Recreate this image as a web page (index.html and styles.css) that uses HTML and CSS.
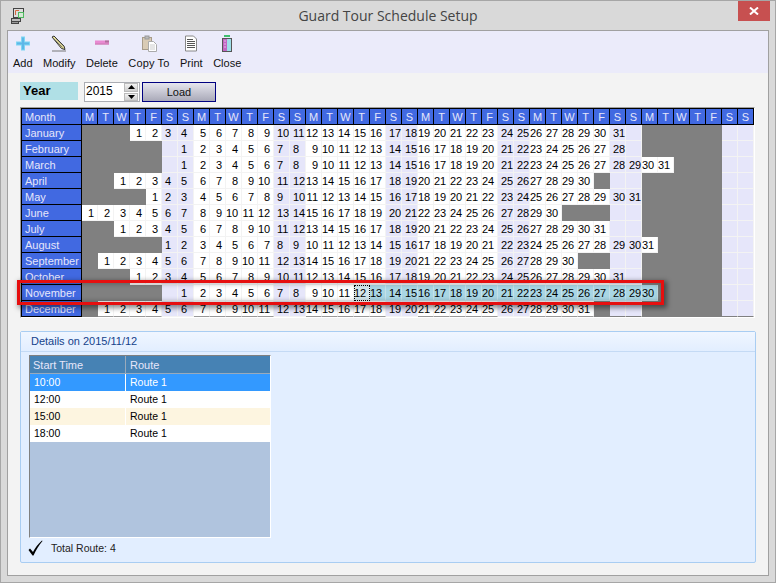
FILE: index.html
```html
<!DOCTYPE html>
<html lang="en">
<head>
<meta charset="utf-8">
<title>Guard Tour Schedule Setup</title>
<link rel="stylesheet" href="styles.css">
</head>
<body>
<div class="window">
  <header class="titlebar">
    <svg class="appicon" width="15" height="16" viewBox="0 0 15 16"><rect x="2.500" y="0.500" width="10" height="9" fill="#ddd" stroke="#444"/><path d="M4.500 7V2.500H8" fill="none" stroke="#d8683f"/><rect x="7.500" y="4.500" width="5" height="5" fill="#d5e8d5" stroke="#4db85e"/><rect x="0.500" y="10.500" width="9" height="3" fill="#bbb" stroke="#444"/><rect x="0.500" y="13.500" width="7" height="2" fill="#999" stroke="#444"/></svg>
    <div class="title">Guard Tour Schedule Setup</div>
    <div class="closebtn"><svg width="10" height="8" viewBox="0 0 10 8"><path d="M1 0.500 L9 7.500 M9 0.500 L1 7.500" stroke="#fff" stroke-width="2"/></svg></div>
  </header>
  <main class="client">
    <nav class="toolbar">
      <div class="tool">
        <svg width="16" height="16" viewBox="0 0 16 16"><path d="M6 1h4v5h5v4h-5v5H6v-5H1V6h5z" fill="#7fd6f2"/><path d="M7 2h2v5h5v2H9v5H7V9H2V7h5z" fill="#5db7e8"/></svg>
        <span>Add</span>
      </div>
      <div class="tool">
        <svg width="16" height="16" viewBox="0 0 16 16"><path d="M1 1.500 L3 0.500 L13 10.500 L14 14 L10.500 13 Z" fill="#e6df9a" stroke="#333" stroke-width="1"/><path d="M3 3.500 L11.500 12 M5 3 L12.500 10.500" stroke="#555" stroke-width=".7"/><path d="M1 15.500H15" stroke="#777"/></svg>
        <span>Modify</span>
      </div>
      <div class="tool">
        <svg width="16" height="16" viewBox="0 0 16 16"><rect x="1" y="5" width="14" height="4" fill="#e98ad2"/><rect x="1" y="8" width="14" height="1" fill="#c77db0"/><rect x="11" y="5" width="4" height="2" fill="#b0709c"/></svg>
        <span>Delete</span>
      </div>
      <div class="tool copy">
        <svg width="16" height="17" viewBox="0 0 16 17"><rect x="1.500" y="2.500" width="9" height="12" fill="#d9cbb5" stroke="#a89c8a"/><rect x="4" y="1" width="4" height="3" fill="#bbb" stroke="#999"/><path d="M7.500 6.500h5l3 3v7h-8z" fill="#fff" stroke="#aaa"/><path d="M9 10h5M9 12h5M9 14h5" stroke="#ccc"/></svg>
        <span>Copy To</span>
      </div>
      <div class="tool">
        <svg width="14" height="16" viewBox="0 0 14 16"><path d="M1.500 .5h8l3 3v12h-11z" fill="#fff" stroke="#888"/><path d="M3 4h6M3 6h8M3 8h8M3 10h8M3 12h8" stroke="#555"/></svg>
        <span>Print</span>
      </div>
      <div class="tool">
        <svg width="12" height="17" viewBox="0 0 12 17"><rect x="3" y="0" width="6" height="2" fill="#3fbf6f"/><rect x="1.500" y="3.500" width="9" height="13" fill="#c266c2" stroke="#555"/><rect x="6" y="4" width="4" height="12" fill="#9fdfe8"/><path d="M3 6h2M3 9h2M3 12h2" stroke="#e8b8e8"/></svg>
        <span>Close</span>
      </div>
    </nav>
    <section class="yearbar">
      <div class="yearlabel">Year</div>
      <div class="spin">
        <span class="spinval">2015</span>
        <div class="spinbtns">
          <div class="spinbtn"><svg width="7" height="4" viewBox="0 0 7 4"><path d="M3.500 0L7 4H0z"/></svg></div>
          <div class="spinbtn"><svg width="7" height="4" viewBox="0 0 7 4"><path d="M0 0H7L3.500 4z"/></svg></div>
        </div>
      </div>
      <button class="load" type="button">Load</button>
    </section>
    <section class="calendar">
      <div class="row head"><div class="m">Month</div><div class="h">M</div><div class="h">T</div><div class="h">W</div><div class="h">T</div><div class="h">F</div><div class="h">S</div><div class="h">S</div><div class="h">M</div><div class="h">T</div><div class="h">W</div><div class="h">T</div><div class="h">F</div><div class="h">S</div><div class="h">S</div><div class="h">M</div><div class="h">T</div><div class="h">W</div><div class="h">T</div><div class="h">F</div><div class="h">S</div><div class="h">S</div><div class="h">M</div><div class="h">T</div><div class="h">W</div><div class="h">T</div><div class="h">F</div><div class="h">S</div><div class="h">S</div><div class="h">M</div><div class="h">T</div><div class="h">W</div><div class="h">T</div><div class="h">F</div><div class="h">S</div><div class="h">S</div><div class="h">M</div><div class="h">T</div><div class="h">W</div><div class="h">T</div><div class="h">F</div><div class="h">S</div><div class="h">S</div></div>
      <div class="row"><div class="m">January</div><span></span><span></span><span></span><span>1</span><span>2</span><span>3</span><span>4</span><span>5</span><span>6</span><span>7</span><span>8</span><span>9</span><span>10</span><span>11</span><span>12</span><span>13</span><span>14</span><span>15</span><span>16</span><span>17</span><span>18</span><span>19</span><span>20</span><span>21</span><span>22</span><span>23</span><span>24</span><span>25</span><span>26</span><span>27</span><span>28</span><span>29</span><span>30</span><span>31</span><span></span><span></span><span></span><span></span><span></span><span></span><span></span><span></span></div>
      <div class="row"><div class="m">February</div><span></span><span></span><span></span><span></span><span></span><span></span><span>1</span><span>2</span><span>3</span><span>4</span><span>5</span><span>6</span><span>7</span><span>8</span><span>9</span><span>10</span><span>11</span><span>12</span><span>13</span><span>14</span><span>15</span><span>16</span><span>17</span><span>18</span><span>19</span><span>20</span><span>21</span><span>22</span><span>23</span><span>24</span><span>25</span><span>26</span><span>27</span><span>28</span><span></span><span></span><span></span><span></span><span></span><span></span><span></span><span></span></div>
      <div class="row"><div class="m">March</div><span></span><span></span><span></span><span></span><span></span><span></span><span>1</span><span>2</span><span>3</span><span>4</span><span>5</span><span>6</span><span>7</span><span>8</span><span>9</span><span>10</span><span>11</span><span>12</span><span>13</span><span>14</span><span>15</span><span>16</span><span>17</span><span>18</span><span>19</span><span>20</span><span>21</span><span>22</span><span>23</span><span>24</span><span>25</span><span>26</span><span>27</span><span>28</span><span>29</span><span>30</span><span>31</span><span></span><span></span><span></span><span></span><span></span></div>
      <div class="row"><div class="m">April</div><span></span><span></span><span>1</span><span>2</span><span>3</span><span>4</span><span>5</span><span>6</span><span>7</span><span>8</span><span>9</span><span>10</span><span>11</span><span>12</span><span>13</span><span>14</span><span>15</span><span>16</span><span>17</span><span>18</span><span>19</span><span>20</span><span>21</span><span>22</span><span>23</span><span>24</span><span>25</span><span>26</span><span>27</span><span>28</span><span>29</span><span>30</span><span></span><span></span><span></span><span></span><span></span><span></span><span></span><span></span><span></span><span></span></div>
      <div class="row"><div class="m">May</div><span></span><span></span><span></span><span></span><span>1</span><span>2</span><span>3</span><span>4</span><span>5</span><span>6</span><span>7</span><span>8</span><span>9</span><span>10</span><span>11</span><span>12</span><span>13</span><span>14</span><span>15</span><span>16</span><span>17</span><span>18</span><span>19</span><span>20</span><span>21</span><span>22</span><span>23</span><span>24</span><span>25</span><span>26</span><span>27</span><span>28</span><span>29</span><span>30</span><span>31</span><span></span><span></span><span></span><span></span><span></span><span></span><span></span></div>
      <div class="row"><div class="m">June</div><span>1</span><span>2</span><span>3</span><span>4</span><span>5</span><span>6</span><span>7</span><span>8</span><span>9</span><span>10</span><span>11</span><span>12</span><span>13</span><span>14</span><span>15</span><span>16</span><span>17</span><span>18</span><span>19</span><span>20</span><span>21</span><span>22</span><span>23</span><span>24</span><span>25</span><span>26</span><span>27</span><span>28</span><span>29</span><span>30</span><span></span><span></span><span></span><span></span><span></span><span></span><span></span><span></span><span></span><span></span><span></span><span></span></div>
      <div class="row"><div class="m">July</div><span></span><span></span><span>1</span><span>2</span><span>3</span><span>4</span><span>5</span><span>6</span><span>7</span><span>8</span><span>9</span><span>10</span><span>11</span><span>12</span><span>13</span><span>14</span><span>15</span><span>16</span><span>17</span><span>18</span><span>19</span><span>20</span><span>21</span><span>22</span><span>23</span><span>24</span><span>25</span><span>26</span><span>27</span><span>28</span><span>29</span><span>30</span><span>31</span><span></span><span></span><span></span><span></span><span></span><span></span><span></span><span></span><span></span></div>
      <div class="row"><div class="m">August</div><span></span><span></span><span></span><span></span><span></span><span>1</span><span>2</span><span>3</span><span>4</span><span>5</span><span>6</span><span>7</span><span>8</span><span>9</span><span>10</span><span>11</span><span>12</span><span>13</span><span>14</span><span>15</span><span>16</span><span>17</span><span>18</span><span>19</span><span>20</span><span>21</span><span>22</span><span>23</span><span>24</span><span>25</span><span>26</span><span>27</span><span>28</span><span>29</span><span>30</span><span>31</span><span></span><span></span><span></span><span></span><span></span><span></span></div>
      <div class="row"><div class="m">September</div><span></span><span>1</span><span>2</span><span>3</span><span>4</span><span>5</span><span>6</span><span>7</span><span>8</span><span>9</span><span>10</span><span>11</span><span>12</span><span>13</span><span>14</span><span>15</span><span>16</span><span>17</span><span>18</span><span>19</span><span>20</span><span>21</span><span>22</span><span>23</span><span>24</span><span>25</span><span>26</span><span>27</span><span>28</span><span>29</span><span>30</span><span></span><span></span><span></span><span></span><span></span><span></span><span></span><span></span><span></span><span></span><span></span></div>
      <div class="row"><div class="m">October</div><span></span><span></span><span></span><span>1</span><span>2</span><span>3</span><span>4</span><span>5</span><span>6</span><span>7</span><span>8</span><span>9</span><span>10</span><span>11</span><span>12</span><span>13</span><span>14</span><span>15</span><span>16</span><span>17</span><span>18</span><span>19</span><span>20</span><span>21</span><span>22</span><span>23</span><span>24</span><span>25</span><span>26</span><span>27</span><span>28</span><span>29</span><span>30</span><span>31</span><span></span><span></span><span></span><span></span><span></span><span></span><span></span><span></span></div>
      <div class="row"><div class="m">November</div><span></span><span></span><span></span><span></span><span></span><span></span><span>1</span><span>2</span><span>3</span><span>4</span><span>5</span><span>6</span><span>7</span><span>8</span><span>9</span><span>10</span><span>11</span><span class="f">12</span><span class="s">13</span><span class="s">14</span><span class="s">15</span><span class="s">16</span><span class="s">17</span><span class="s">18</span><span class="s">19</span><span class="s">20</span><span class="s">21</span><span class="s">22</span><span class="s">23</span><span class="s">24</span><span class="s">25</span><span class="s">26</span><span class="s">27</span><span class="s">28</span><span class="s">29</span><span class="s">30</span><span></span><span></span><span></span><span></span><span></span><span></span></div>
      <div class="row last"><div class="m">December</div><span></span><span>1</span><span>2</span><span>3</span><span>4</span><span>5</span><span>6</span><span>7</span><span>8</span><span>9</span><span>10</span><span>11</span><span>12</span><span>13</span><span>14</span><span>15</span><span>16</span><span>17</span><span>18</span><span>19</span><span>20</span><span>21</span><span>22</span><span>23</span><span>24</span><span>25</span><span>26</span><span>27</span><span>28</span><span>29</span><span>30</span><span>31</span><span></span><span></span><span></span><span></span><span></span><span></span><span></span><span></span><span></span><span></span></div>
      <div class="callout"></div>
    </section>
    <section class="details">
      <div class="detailshead">Details on 2015/11/12</div>
      <div class="detailsbody">
        <div class="routes">
          <div class="rrow rhead"><div class="c1">Start Time</div><div class="c2">Route</div></div>
          <div class="rrow rsel"><div class="c1">10:00</div><div class="c2">Route 1</div></div>
          <div class="rrow"><div class="c1">12:00</div><div class="c2">Route 1</div></div>
          <div class="rrow ralt"><div class="c1">15:00</div><div class="c2">Route 1</div></div>
          <div class="rrow"><div class="c1">18:00</div><div class="c2">Route 1</div></div>
        </div>
        <div class="total">
          <svg width="15" height="16" viewBox="0 0 15 16"><path d="M0.500 10 L2 8.500 L5 12 C7 8 10 4 14 0.500 L14.500 1 C11 5 8 10 5.500 15.500 L4.500 15.500 Z" fill="#000"/></svg>
          <span>Total Route: 4</span>
        </div>
      </div>
    </section>
  </main>
</div>
</body>
</html>
```
FILE: styles.css
```css
* { box-sizing: border-box; }
html, body { margin: 0; padding: 0; }
body { font-family: "Liberation Sans", Arial, sans-serif; font-size: 11px; color: #000; background: #d9d9d9; }
.window { width: 776px; height: 583px; border: 1px solid #a6a6a6; background: #d9d9d9; display: flex; flex-direction: column; overflow: hidden; }
.titlebar { height: 29px; flex: none; display: flex; align-items: flex-start; position: relative; }
.appicon { margin: 7px 0 0 10px; flex: none; }
.title { position: absolute; left: 0; right: 0; top: 5px; text-align: center; font-family: "Open Sans", sans-serif; font-size: 14px; line-height: 20px; color: #444; }
.closebtn { position: absolute; right: 5px; top: 0; width: 32px; height: 20px; background: #c75050; display: flex; align-items: center; justify-content: center; }
.client { flex: 1; margin: 0 6px 6px; border: 1px solid #a0a0a0; background: #f3f3f3; display: flex; flex-direction: column; }
.toolbar { height: 42px; flex: none; background: #ebebfa; display: flex; padding: 0 0 0 5px; gap: 10.500px; }
.tool { display: flex; flex-direction: column; align-items: center; color: #111; }
.tool svg { height: 17px; margin-top: 4px; flex: none; }
.tool span { margin-top: 4px; line-height: 14px; white-space: nowrap; }
.copy span { letter-spacing: .15px; }
.yearbar { display: flex; margin: 9px 0 0 12px; height: 20px; flex: none; }
.yearlabel { width: 58px; height: 18px; background: #b0e0e6; font-weight: bold; font-size: 13px; line-height: 18px; padding-left: 3px; }
.spin { width: 56px; height: 20px; margin-left: 6px; background: #fff; border: 1px solid #abadb3; display: flex; justify-content: space-between; font-size: 12px; }
.spinval { line-height: 17px; padding-left: 1px; }
.spinbtns { width: 15px; display: flex; flex-direction: column; gap: 1px; padding: 0 1px 0 0; }
.spinbtn { flex: 1; background: linear-gradient(#f2f2f2, #cfcfcf); border: 1px solid #bbb; display: flex; align-items: center; justify-content: center; }
.load { width: 74px; height: 20px; margin-left: 2px; border: 1px solid #000080; background: linear-gradient(#e6e6ee, #a9a9b8); font: inherit; padding: 0; color: #111; }
.calendar { position: relative; margin: 5px 0 0 12px; width: 735px; flex: none; border: 1px solid; border-color: #a0a0a0 #fff #fff #a0a0a0; }
.row { display: flex; height: 16px; }
.row .m { width: 61px; flex: none; background: #4169e1; color: #e6e6fa; border: 1px solid #000; border-width: 0 1px 1px 1px; padding-left: 3px; line-height: 17px; }
.row span { width: 16px; flex: none; background: #fff; border: 1px solid #f3f3f3; border-width: 0 1px 1px 0; text-align: right; padding-right: 3px; line-height: 17px; white-space: nowrap; }
.row span:empty { background: #808080; border-color: #808080; }
.row span:nth-child(7n), .row span:nth-child(7n+1) { background: #e6e6fa; text-align: left; padding: 0 0 0 3px; border-color: #f3f3f3; }
.row span.s { background: #a9d6e4; border-color: #c4e0e8; }
.row span.f { background: #d3e6ec; outline: 1px dotted #000; outline-offset: -1px; }
.last span { border-bottom-color: #999; }
.last span:empty { border-bottom-color: #808080; }
.head { height: 17px; }
.head .m { border-width: 1px 1px 1px 1px; line-height: 16px; }
.head .h { width: 16px; flex: none; background: #4169e1; color: #e6e6fa; border: 1px solid #000; border-width: 1px 1px 1px 0; text-align: center; line-height: 16px; }
.callout { position: absolute; left: -4px; top: 172px; width: 647px; height: 25px; border: 3px solid #e60f0f; box-shadow: 2px 2px 5px 1px rgba(0,0,0,.45), inset 0 0 5px 1px rgba(0,0,0,.28); pointer-events: none; }
.details { margin: 13px 0 0 12px; width: 736px; height: 232px; flex: none; border: 1px solid #a9cdf2; border-radius: 2px; background: #e2eeff; display: flex; flex-direction: column; }
.detailshead { height: 20px; flex: none; background: linear-gradient(#f0f6ff, #e2eeff); border-bottom: 1px solid #c4daf5; color: #15428b; padding-left: 10px; line-height: 19px; font-size: 11px; }
.detailsbody { padding: 3px 8px 0 8px; flex: 1; display: flex; flex-direction: column; }
.routes { width: 242px; height: 183px; flex: none; background: #b0c4de; border: 1px solid; border-color: #808080 #fff #fff #808080; }
.rrow { display: flex; height: 17px; line-height: 16px; font-size: 10.500px; background: #fff; }
.c1 { width: 96px; padding-left: 4px; border-right: 1px solid #fff; flex: none; }
.c2 { flex: 1; padding-left: 4px; }
.rhead { height: 18px; line-height: 18px; font-size: 11px; background: #4682b4; color: #e6e6fa; border-bottom: 1px solid #9ab; }
.rhead .c1 { border-right-color: #9ab; padding-left: 3px; }
.rsel { background: #3399ff; color: #fff; }
.ralt { background: #fdf5e0; }
.total { display: flex; align-items: center; gap: 8px; margin: 2px 0 0 -1px; height: 16px; font-size: 10.500px; color: #222; }
```
